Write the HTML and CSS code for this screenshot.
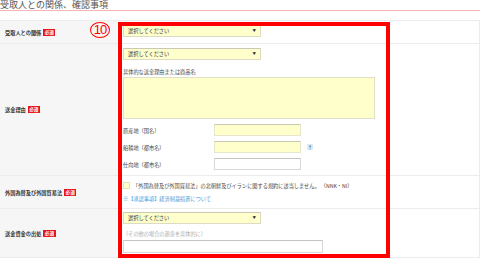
FILE: index.html
```html
<!DOCTYPE html>
<html>
<head>
	<title>受取人との関係、確認事項</title>
	<link rel="stylesheet" href="styles.css">
</head>
<body>
	<div class="page">
		<h2 class="section-title">受取人との関係、確認事項</h2>

		<div class="form-table">
			<!-- row 1 -->
			<div class="form-row row-relation">
				<div class="form-label">受取人との関係<span class="req">必須</span></div>
				<div class="form-field">
					<div class="select-box"><span>選択してください</span></div>
				</div>
			</div>
			<!-- row 2 -->
			<div class="form-row row-reason">
				<div class="form-label">送金理由<span class="req">必須</span></div>
				<div class="form-field">
					<div class="select-box"><span>選択してください</span></div>
					<p class="field-note">具体的な送金理由または商品名</p>
					<div class="textarea-box"></div>
					<div class="place-line">
						<span class="place-name">原産地（国名）</span>
						<span class="text-box yellow"></span>
					</div>
					<div class="place-line">
						<span class="place-name">船積地（都市名）</span>
						<span class="text-box yellow"></span>
						<span class="help-icon">&#8593;</span>
					</div>
					<div class="place-line">
						<span class="place-name">仕向地（都市名）</span>
						<span class="text-box"></span>
					</div>
				</div>
			</div>
			<!-- row 3 -->
			<div class="form-row row-law">
				<div class="form-label">外国為替及び外国貿易法<span class="req">必須</span></div>
				<div class="form-field">
					<div class="check-line">
						<span class="check"></span>
						<span>「外国為替及び外国貿易法」の北朝鮮及びイランに関する規約に該当しません。 （NNK・NI）</span>
					</div>
					<a class="note-link" href="#">※【承認事項】経済制裁措置について</a>
				</div>
			</div>
			<!-- row 4 -->
			<div class="form-row row-source">
				<div class="form-label">送金資金の出処<span class="req">必須</span></div>
				<div class="form-field">
					<div class="select-box"><span>選択してください</span></div>
					<p class="field-note gray">（その他の場合の源泉を具体的に）</p>
					<span class="text-box wide"></span>
				</div>
			</div>
		</div>

		<!-- annotation -->
		<div class="mark-num">10</div>
		<div class="mark-box"></div>
	</div>
</body>
</html>
```

FILE: styles.css
```css
body {
	margin: 0;
	background: #ffffff;
	font-family: "Noto Sans CJK JP", "Noto Sans", sans-serif;
	color: #333333;
}
.page {
	position: relative;
	width: 480px;
	height: 267px;
	overflow: hidden;
}
.section-title {
	margin: 0;
	height: 10px;
	font-size: 9px;
	line-height: 9px;
	font-weight: normal;
	color: #555555;
	border-bottom: 1px solid #f7b4b4;
}
.form-table {
	margin-top: 9px;
	width: 479px;
	border-top: 1px solid #ececec;
	border-right: 1px solid #ececec;
}
.form-row {
	display: flex;
	border-bottom: 1px solid #ececec;
}
.form-label {
	width: 112px;
	padding-left: 5px;
	background: #f6f6f6;
	display: flex;
	align-items: center;
	font-size: 5.2px;
	font-weight: bold;
	color: #333333;
}
.req {
	display: inline-block;
	margin-left: 2px;
	padding: 0 1.5px;
	height: 7px;
	line-height: 7px;
	background: #e8141b;
	color: #ffffff;
	font-size: 4.6px;
}
.form-field {
	flex: 1;
	padding: 0 0 0 6px;
	font-size: 5.2px;
}
.row-relation { height: 22px; }
.row-relation .form-field { padding-top: 4px; }
.row-reason { height: 131px; }
.row-reason .form-field { padding-top: 4px; }
.row-law { height: 32px; }
.row-law .form-field { padding-top: 5px; }
.row-source { height: 48px; }
.row-source .form-field { padding-top: 3px; }

.select-box {
	position: relative;
	width: 132px;
	height: 10px;
	border: 1px solid #dcdcc4;
	border-top-color: #c9c9b5;
	background: #ffffcc;
	line-height: 10px;
	padding-left: 4px;
	color: #333333;
}
.select-box::after {
	content: "\25BC";
	position: absolute;
	right: 4px;
	top: 0;
	font-size: 3.5px;
	color: #222222;
}
.field-note {
	margin: 8px 0 0;
	line-height: 7px;
	color: #444444;
}
.field-note.gray {
	margin-top: 6px;
	color: #aaaaaa;
}
.textarea-box {
	margin-top: 2px;
	width: 250px;
	height: 40px;
	border: 1px solid #e0e0c8;
	background: #ffffcc;
}
.place-line {
	display: flex;
	align-items: center;
	margin-top: 5px;
	height: 12px;
}
.place-line:first-of-type { margin-top: 7px; }
.place-name {
	width: 91px;
	color: #444444;
}
.text-box {
	display: inline-block;
	width: 85px;
	height: 10px;
	border: 1px solid #d8d8d8;
	border-top-color: #c4c4c4;
	background: #ffffff;
}
.text-box.yellow {
	background: #ffffcc;
	border-color: #e6e6cc;
	border-top-color: #c8c8b4;
}
.text-box.wide {
	display: block;
	margin-top: 3px;
	width: 198px;
	height: 11px;
}
.help-icon {
	margin-left: 6px;
	width: 6px;
	height: 6px;
	background: #e3e9f1;
	color: #3a6ea8;
	font-size: 5px;
	line-height: 6px;
	text-align: center;
	font-weight: bold;
}
.check-line {
	display: flex;
	align-items: center;
	height: 8px;
	color: #444444;
}
.check {
	width: 5px;
	height: 5px;
	margin-right: 3px;
	border: 1px solid #e2e2c0;
	background: #ffffcc;
}
.note-link {
	display: block;
	margin-top: 6px;
	color: #4a9ad6;
	text-decoration: none;
}

/* annotation overlay */
.mark-box {
	position: absolute;
	left: 118px;
	top: 22px;
	width: 264px;
	height: 228px;
	border: 4px solid #ff0000;
}
.mark-num {
	position: absolute;
	left: 90px;
	top: 22px;
	width: 18px;
	height: 14px;
	border: 1px solid #ff0000;
	border-radius: 50%;
	color: #ff0000;
	font-family: "Liberation Sans", sans-serif;
	font-size: 13px;
	line-height: 14px;
	letter-spacing: -1px;
	text-align: center;
}
```
